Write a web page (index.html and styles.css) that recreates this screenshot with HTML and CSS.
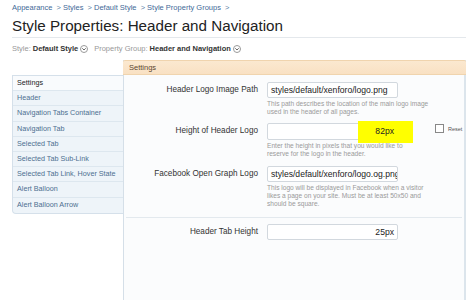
FILE: index.html
```html
<!DOCTYPE html>
<html lang="en">
  <head>
    <meta charset="UTF-8" />
    <meta name="viewport" content="width=device-width, initial-scale=1.0" />
    <title>Style Properties: Header and Navigation</title>
    <link rel="stylesheet" href="styles.css">
  </head>
  <body>
    <div class="page">
      <div class="crumbs">
        <a href="#">Appearance</a> &gt;
        <a href="#">Styles</a> &gt;
        <a href="#">Default Style</a> &gt;
        <a href="#">Style Property Groups</a> &gt;
      </div>
      <h1 class="title">Style Properties: Header and Navigation</h1>

      <div class="chooser">
        <span class="muted">Style:</span> <b>Default Style</b>
        <svg class="drop" width="8" height="8" viewBox="0 0 8 8"><circle cx="4" cy="4" r="3.5" fill="#fff" stroke="#999"/><path d="M2.3 3.3 L4 5 L5.7 3.3" fill="none" stroke="#666" stroke-width="1"/></svg>
        <span class="muted spaced">Property Group:</span> <b>Header and Navigation</b>
        <svg class="drop" width="8" height="8" viewBox="0 0 8 8"><circle cx="4" cy="4" r="3.5" fill="#fff" stroke="#999"/><path d="M2.3 3.3 L4 5 L5.7 3.3" fill="none" stroke="#666" stroke-width="1"/></svg>
      </div>

      <div class="main">
        <ul class="side">
          <li class="current">Settings</li>
          <li>Header</li>
          <li>Navigation Tabs Container</li>
          <li>Navigation Tab</li>
          <li>Selected Tab</li>
          <li>Selected Tab Sub-Link</li>
          <li>Selected Tab Link, Hover State</li>
          <li>Alert Balloon</li>
          <li>Alert Balloon Arrow</li>
        </ul>

        <div class="panel">
          <div class="panel-head">Settings</div>

          <div class="row">
            <label class="label">Header Logo Image Path</label>
            <div class="ctrl">
              <div class="line">
                <div class="field">styles/default/xenforo/logo.png</div>
              </div>
              <p class="hint">This path describes the location of the main logo image<br>used in the header of all pages.</p>
            </div>
          </div>

          <div class="row">
            <label class="label">Height of Header Logo</label>
            <div class="ctrl">
              <div class="line">
                <div class="field num marked"><span class="mark"></span><span class="val">82px</span></div>
                <div class="reset"><span class="box"></span>Reset</div>
              </div>
              <p class="hint">Enter the height in pixels that you would like to<br>reserve for the logo in the header.</p>
            </div>
          </div>

          <div class="row third">
            <label class="label">Facebook Open Graph Logo</label>
            <div class="ctrl">
              <div class="line">
                <div class="field">styles/default/xenforo/logo.og.png</div>
              </div>
              <p class="hint">This logo will be displayed in Facebook when a visitor<br>likes a page on your site. Must be at least 50x50 and<br>should be square.</p>
            </div>
          </div>

          <div class="row split">
            <label class="label">Header Tab Height</label>
            <div class="ctrl">
              <div class="line">
                <div class="field num">25px</div>
              </div>
            </div>
          </div>
        </div>
      </div>
    </div>
  </body>
</html>
```

FILE: styles.css
```css
* {
  margin: 0;
  padding: 0;
  box-sizing: border-box;
}

body {
  background: #fff;
  font-family: "Liberation Sans", Arial, sans-serif;
  color: #222;
  overflow: hidden;
}

.page {
  padding: 3px 6px 0 12px;
}

.crumbs {
  font-size: 7.5px;
  line-height: 10px;
  color: #5a7fa6;
}
.crumbs a {
  color: #3f6a98;
  text-decoration: none;
  margin-right: 2px;
}

.title {
  font-size: 15.2px;
  font-weight: normal;
  line-height: 18px;
  margin-top: 4px;
  padding-bottom: 2px;
  border-bottom: 1px solid #e4e8ec;
  color: #222;
}

.chooser {
  margin-top: 6px;
  font-size: 7.5px;
  line-height: 10px;
  display: flex;
  align-items: center;
}
.chooser b {
  color: #333;
  margin-left: 2px;
}
.muted {
  color: #999;
}
.spaced {
  margin-left: 6px;
}
.drop {
  margin-left: 2px;
}

.main {
  display: flex;
  margin-top: 6px;
}

.side {
  list-style: none;
  width: 111px;
  margin-top: 15px;
  border: 1px solid #d5e0ea;
  border-right: none;
  border-radius: 0 0 0 4px;
  background: #eef4f9;
  align-self: flex-start;
}
.side li {
  height: 15.2px;
  line-height: 14px;
  padding-left: 4px;
  font-size: 7.2px;
  color: #4d6f90;
  border-bottom: 1px solid #dde7ef;
}
.side li:last-child {
  border-bottom: none;
}
.side .current {
  background: #f9fbfd;
  color: #222;
}

.panel {
  flex: 1;
  height: 240px;
  background: #fbfcfd;
  border-left: 1px solid #d5dfe8;
  border-right: 2px solid #dce5ec;
}
.panel-head {
  height: 15px;
  line-height: 14px;
  padding-left: 6px;
  font-size: 7.5px;
  color: #5b4631;
  background: linear-gradient(#fbe8d0, #f9e1c3);
  border-top: 1px solid #f0d4ae;
  border-bottom: 1px solid #f0d4ae;
  margin-left: -1px;
  margin-right: -2px;
  border-radius: 2px 2px 0 0;
}

.row {
  display: flex;
  gap: 9px;
  padding-top: 7px;
}
.row + .row {
  padding-top: 7px;
}
.row.third {
  padding-top: 8px;
}
.row.split {
  margin: 9px 2px 0;
  padding-top: 6px;
  border-top: 1px solid #e3e9ee;
}
.split .label {
  width: 132px;
}

.label {
  width: 134px;
  text-align: right;
  font-size: 8.2px;
  line-height: 16px;
  color: #333;
}

.line {
  display: flex;
  align-items: flex-start;
}

.field {
  position: relative;
  width: 131px;
  height: 16px;
  line-height: 14px;
  padding: 0 3px;
  font-size: 8.6px;
  color: #222;
  background: #fff;
  border: 1px solid #d2d8de;
  border-radius: 2px;
  overflow: hidden;
  white-space: nowrap;
}
.field.num {
  text-align: right;
}
.field.marked {
  overflow: visible;
  height: 17px;
  line-height: 15px;
}
.mark {
  position: absolute;
  left: 90px;
  top: -3px;
  width: 55px;
  height: 22px;
  background: #ffff00;
}
.val {
  position: relative;
}

.reset {
  display: flex;
  align-items: center;
  margin-left: 37px;
  margin-top: 1px;
  font-size: 5.5px;
  color: #555;
}
.box {
  width: 9px;
  height: 9px;
  border: 1px solid #888;
  background: #fff;
  margin-right: 4px;
}

.hint {
  margin-top: 2px;
  font-size: 6.6px;
  line-height: 8px;
  color: #9a9a9a;
  white-space: nowrap;
}
```
